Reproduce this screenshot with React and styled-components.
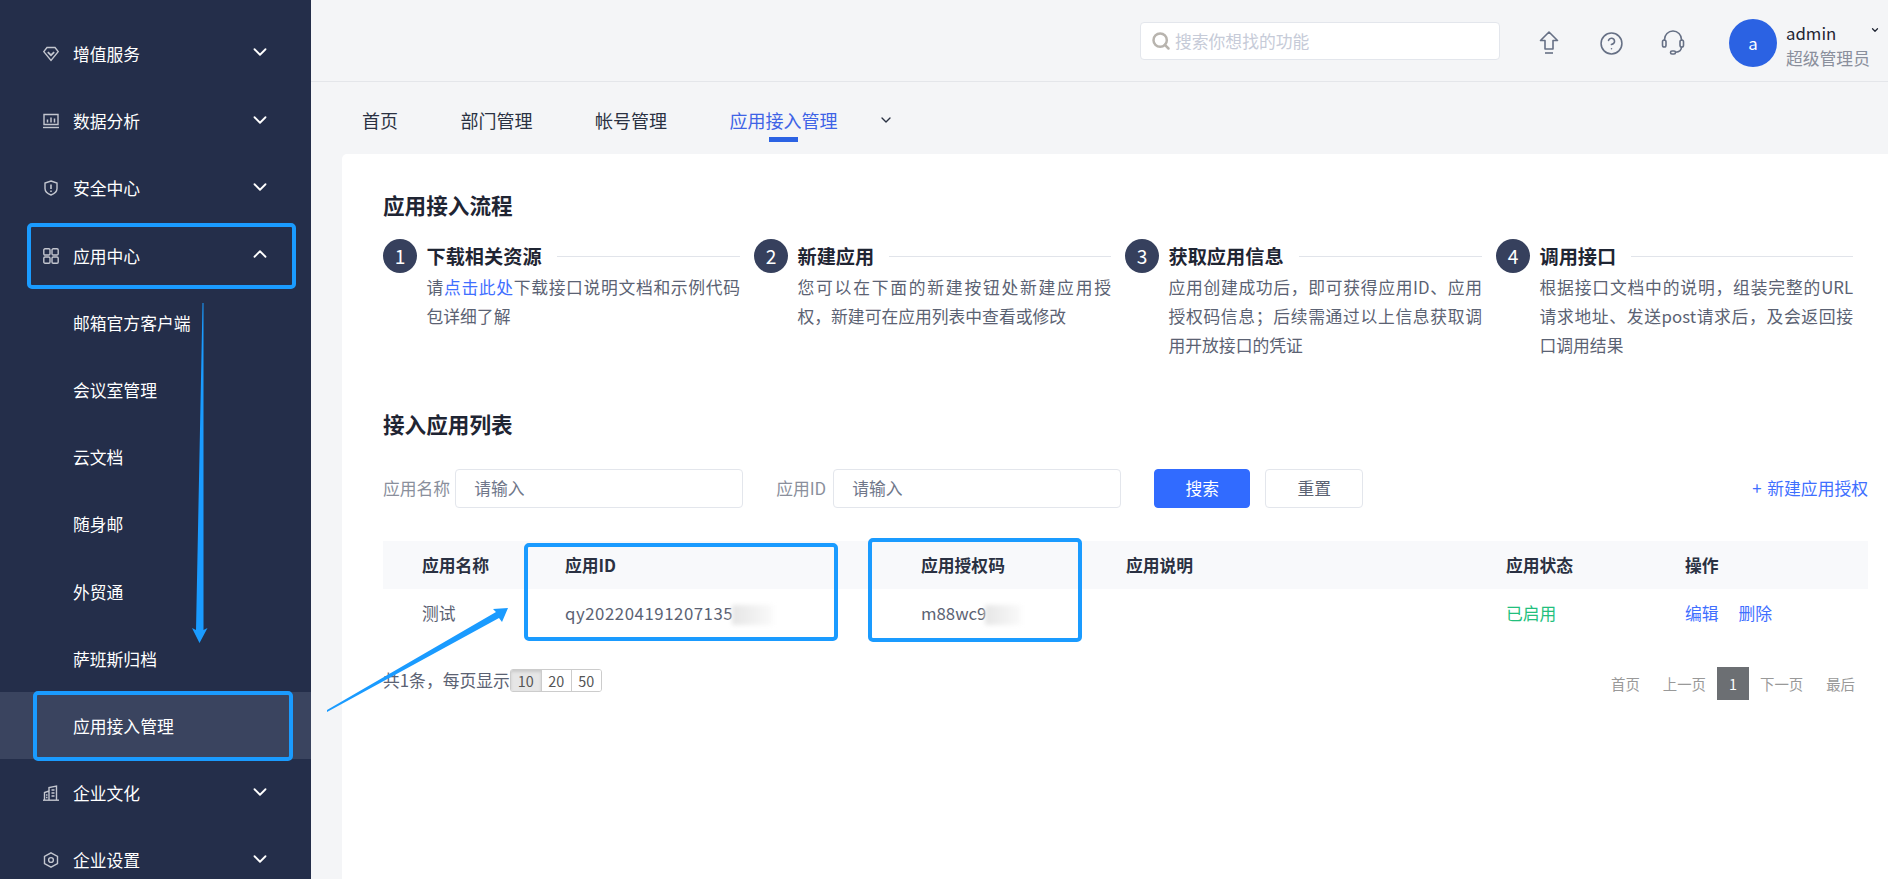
import React from 'react'
import styled, {createGlobalStyle} from 'styled-components'
import {ChevronDown, ChevronUp, CircleHelp, Search} from 'lucide-react'

const GlobalStyle = createGlobalStyle`
    html, body {
        margin: 0;
        padding: 0;
        height: 100%;
        overflow: hidden;
        background: #f4f5f7;
    }
    body {
        font-family: "Noto Sans CJK SC", "Noto Sans", sans-serif;
        font-size: 16.8px;
    }
    * { box-sizing: border-box; }
`

const AppContainer = styled.div`
    position: relative;
    display: flex;
    width: 1888px;
    height: 879px;
    overflow: hidden;
`

/* sidebar */
const Sidebar = styled.nav`
    flex: 0 0 311px;
    padding-top: 20.4px;
    background: #242e4a;
    color: #fff;
`

const MenuRow = styled.div`
    display: flex;
    align-items: center;
    height: 67.2px;
    padding-left: ${props => props.$sub ? '73px' : '43px'};
    padding-right: 40px;
    background: ${props => props.$active ? '#3a445f' : 'transparent'};
    line-height: 1;
`

const MenuIcon = styled.svg`
    flex: 0 0 16px;
    width: 16px;
    height: 16px;
    margin-right: 14px;
    fill: none;
    stroke: #c3c6cf;
    stroke-width: 1.4;
`

const MenuLabel = styled.span`
    flex: 1;
    margin-top: 1px;
`

const MenuChevron = styled.span`
    display: flex;
    margin-top: -3px;
    color: #fff;
`

const DiamondIcon = () =>
    <MenuIcon viewBox="0 0 16 16">
        <path d="M4 1.5h8l3.2 4.2L8 14.5 .8 5.7z" />
        <path d="M4.8 6.2 8 9.2l3.2-3" strokeWidth="1.8" />
    </MenuIcon>

const ScreenIcon = () =>
    <MenuIcon viewBox="0 0 16 16">
        <path d="M1 1.5h14v10H1z" />
        <path d="M0 14.5h16" />
        <path d="M4.5 9.5v-3M8 9.5v-5M11.5 9.5v-4" strokeWidth="1.5" />
    </MenuIcon>

const ShieldIcon = () =>
    <MenuIcon viewBox="0 0 16 16">
        <path d="M8 1 14 3v5.5c0 3-2.8 5.300-6 6.500-3.200-1.200-6-3.500-6-6.500V3z" />
        <path d="M8 4.5v4.500M8 10.500v1.400" strokeWidth="1.6" />
    </MenuIcon>

const GridIcon = () =>
    <MenuIcon viewBox="0 0 16 16">
        <rect x=".8" y=".8" width="6.2" height="6.2" rx="1.2" />
        <rect x="9" y=".8" width="6.2" height="6.2" rx="1.2" />
        <rect x=".8" y="9" width="6.2" height="6.2" rx="1.2" />
        <rect x="9" y="9" width="6.2" height="6.2" rx="1.2" />
    </MenuIcon>

const BuildingIcon = () =>
    <MenuIcon viewBox="0 0 16 16">
        <path d="M0 15.2h16" />
        <path d="M1.5 15V7.5L6 6v9M6 15V2.5L13.500 1v14" />
        <path d="M8.5 5h3M8.5 8h3M8.5 11h3M3 10h1.500M3 12.500h1.500" />
    </MenuIcon>

const HexIcon = () =>
    <MenuIcon viewBox="0 0 16 16">
        <path d="M8 .8 14.5 4.400v7.200L8 15.200 1.500 11.600V4.400z" />
        <circle cx="8" cy="8" r="2.4" />
    </MenuIcon>

const Chevron = ({up}) =>
    <MenuChevron>
        {up ? <ChevronUp size={22} strokeWidth={2} /> : <ChevronDown size={22} strokeWidth={2} />}
    </MenuChevron>

const MenuItem = ({icon: Icon, title, up}) =>
    <MenuRow>
        <Icon />
        <MenuLabel>{title}</MenuLabel>
        <Chevron up={up} />
    </MenuRow>

const SubItem = ({title, active}) =>
    <MenuRow $sub $active={active}>
        <MenuLabel>{title}</MenuLabel>
    </MenuRow>

/* top bar */
const Main = styled.div`
    flex: 1;
    min-width: 0;
    display: flex;
    flex-direction: column;
`

const Header = styled.header`
    display: flex;
    align-items: center;
    justify-content: flex-end;
    flex: 0 0 82px;
    padding: 5px 8px 0 0;
    border-bottom: 1px solid #e4e6ea;
`

const SearchBox = styled.div`
    display: flex;
    align-items: center;
    width: 360px;
    height: 38px;
    margin-right: 36px;
    margin-top: -4px;
    padding-left: 10px;
    background: #fff;
    border: 1px solid #e3e6ec;
    border-radius: 4px;
    color: #c6cbd8;

    svg {
        color: #b8b4ae;
        margin-right: 4px;
    }
`

const HeaderIcon = styled.span`
    display: flex;
    align-items: center;
    justify-content: center;
    width: 26px;
    height: 26px;
    margin-right: ${props => props.$last ? '43px' : '36px'};
    color: #667085;
`

const Avatar = styled.div`
    flex: 0 0 48px;
    height: 48px;
    border-radius: 50%;
    background: #2b62e3;
    color: #fff;
    display: flex;
    align-items: center;
    justify-content: center;
    margin-right: 9px;
`

const UserInfo = styled.div`
    width: 84px;
    margin-top: 5px;
    line-height: 25px;
`

const UserName = styled.div`
    color: #1f2533;
`

const UserRole = styled.div`
    color: #8a8f9c;
`

const UserChevron = styled.span`
    display: flex;
    width: 10px;
    margin-top: -27px;
    color: #1f2533;
`

const UploadIcon = () =>
    <svg width="24" height="26" viewBox="0 0 24 26" fill="none" stroke="currentColor" strokeWidth="1.6" strokeLinejoin="round">
        <path d="M12 2 3.5 10.5H8V19h8v-8.500h4.500z" />
        <path d="M8 23h8" />
    </svg>

const HeadsetIcon = () =>
    <svg width="24" height="26" viewBox="0 0 24 26" fill="none" stroke="currentColor" strokeWidth="1.6">
        <path d="M3.5 11V9.5a8.5 8.5 0 0 1 17 0V11" />
        <rect x="1.5" y="10" width="3.5" height="7" rx="1.75" />
        <rect x="19" y="10" width="3.5" height="7" rx="1.75" />
        <path d="M20.5 17c0 3-2.500 5-6 5.300" />
        <rect x="9.5" y="21" width="5" height="3" rx="1.5" />
    </svg>

/* tabs */
const Tabs = styled.div`
    display: flex;
    flex: 0 0 72px;
    padding: 23px 0 0 51px;
    font-size: 18px;
    line-height: 30px;
    color: #2a3142;
`

const Tab = styled.div`
    position: relative;
    margin-right: 62.5px;
    color: ${props => props.$active ? '#3e63e6' : '#2a3142'};

    &::after {
        content: '';
        display: ${props => props.$active ? 'block' : 'none'};
        position: absolute;
        left: 50%;
        top: 32px;
        width: 29px;
        height: 5px;
        margin-left: -14.5px;
        background: #2b62e3;
    }
`

const TabChevron = styled.span`
    display: flex;
    align-items: center;
    height: 30px;
    margin-left: -22px;
    color: #2a3142;
`

/* card */
const Card = styled.section`
    flex: 1;
    margin-left: 31px;
    padding: 36px 20px 0 41px;
    background: #fff;
    border-radius: 5px 0 0 0;
`

const SectionTitle = styled.h2`
    margin: ${props => props.$second ? '49.6px' : '0'} 0 0;
    font-size: 21.6px;
    font-weight: 700;
    line-height: 30px;
    color: #1f2533;
`

const Steps = styled.div`
    display: grid;
    grid-template-columns: repeat(4, 357px);
    column-gap: 14px;
    margin-top: 19px;
`

const Step = styled.div`
    display: grid;
    grid-template-columns: 34px 313.5px;
    column-gap: 9.5px;
    align-content: start;
`

const StepNumber = styled.div`
    display: flex;
    align-items: center;
    justify-content: center;
    width: 34px;
    height: 34px;
    border-radius: 50%;
    background: #36405d;
    color: #fff;
    font-size: 19.2px;
`

const StepHead = styled.div`
    display: flex;
    align-items: center;
    height: 34px;
`

const StepTitle = styled.div`
    font-size: 19.2px;
    font-weight: 700;
    color: #1f2533;
    white-space: nowrap;
`

const StepLine = styled.div`
    flex: 1;
    height: 1px;
    margin-left: 15px;
    background: #e1e4ea;
`

const StepText = styled.p`
    grid-column: 2;
    margin: 0;
    line-height: 28.8px;
    text-align: justify;
    color: #5b6273;

    a {
        color: #3f6fff;
        text-decoration: none;
    }
`

const FilterRow = styled.div`
    display: flex;
    align-items: center;
    height: 39px;
    margin-top: 30px;
`

const FilterLabel = styled.span`
    margin-right: ${props => props.$gap || 5}px;
    color: #8a8f9c;
    white-space: nowrap;
`

const FilterInput = styled.div`
    width: 288px;
    height: 39px;
    margin-right: 33px;
    padding-left: 18px;
    line-height: 37px;
    border: 1px solid #e3e6ec;
    border-radius: 4px;
    color: #70778a;
`

const Button = styled.button`
    width: ${props => props.$primary ? '96px' : '98px'};
    height: 39px;
    margin-right: 15px;
    padding: 0;
    font: inherit;
    border-radius: 4px;
    border: 1px solid ${props => props.$primary ? '#316bff' : '#e3e6ec'};
    background: ${props => props.$primary ? '#316bff' : '#fff'};
    color: ${props => props.$primary ? '#fff' : '#5b6273'};
`

const AddLink = styled.a`
    margin-left: auto;
    color: #3f6fff;
    word-spacing: 2px;
`

const TableHead = styled.div`
    display: grid;
    grid-template-columns: 143px 356px 205px 380px 179px 222px;
    align-items: center;
    height: 48px;
    margin-top: 33px;
    background: #f8f9fb;
    font-weight: 700;
    color: #2a3142;
`

const TableRow = styled(TableHead)`
    margin-top: 0;
    background: #fff;
    font-weight: 400;
    color: #5b6273;
`

const Cell = styled.div`
    padding-left: 39px;
    white-space: nowrap;
    color: ${props => props.$color || 'inherit'};
    letter-spacing: ${props => props.$spaced ? '.55px' : '0'};
`

const RowLink = styled.a`
    margin-right: 20px;
    color: #3f6fff;
`

const Smudge = styled.span`
    display: inline-block;
    vertical-align: middle;
    width: ${props => props.$w}px;
    height: 20px;
    margin-left: -1px;
    background: linear-gradient(90deg, #e6e6e6, #f4f4f4 70%, #fafafa);
    filter: blur(2px);
`

const Footer = styled.div`
    display: flex;
    align-items: flex-start;
    justify-content: space-between;
    margin-top: 30px;
    padding-right: 13px;
`

const PageSize = styled.div`
    display: flex;
    align-items: center;
    height: 23px;
    margin-top: 2px;
    color: #5b6273;
`

const SizeGroup = styled.div`
    display: flex;
    height: 23px;
    border: 1px solid #ccc;
    border-radius: 3px;
    overflow: hidden;
`

const SizeButton = styled.span`
    width: 30px;
    text-align: center;
    font-size: 14.4px;
    line-height: 21px;
    color: #555;
    background: ${props => props.$active ? '#e6e6e6' : '#fff'};
    box-shadow: ${props => props.$active ? 'inset 0 2px 3px rgba(0,0,0,.12)' : 'none'};
    border-left: ${props => props.$first ? '0' : '1px solid #ccc'};
`

const Pager = styled.div`
    display: flex;
    align-items: center;
    gap: 23px;
    height: 33px;
    font-size: 14.4px;
    color: #999;
`

const PagerCurrent = styled.span`
    width: 32px;
    height: 33px;
    margin: 0 -12px;
    line-height: 33px;
    text-align: center;
    background: #6c6f73;
    color: #fff;
`

/* blue markup drawn on top of the screenshot */
const MarkBox = styled.div`
    position: absolute;
    left: ${props => props.$x}px;
    top: ${props => props.$y}px;
    width: ${props => props.$w}px;
    height: ${props => props.$h}px;
    border: 4px solid #1a9bff;
    border-radius: 5px;
    pointer-events: none;
`

const MarkLayer = styled.svg`
    position: absolute;
    left: 0;
    top: 0;
    width: 1888px;
    height: 879px;
    pointer-events: none;
    fill: #1a9bff;
`

const steps = [
    {n: 1, title: '下载相关资源', text: <><span>请</span><a>点击此处</a><span>下载接口说明文档和示例代码</span><span>包详细了解</span></>},
    {n: 2, title: '新建应用', text: '您可以在下面的新建按钮处新建应用授权，新建可在应用列表中查看或修改'},
    {n: 3, title: '获取应用信息', text: '应用创建成功后，即可获得应用ID、应用授权码信息；后续需通过以上信息获取调用开放接口的凭证'},
    {n: 4, title: '调用接口', text: '根据接口文档中的说明，组装完整的URL请求地址、发送post请求后，及会返回接口调用结果'},
]

function App() {
    return (
        <AppContainer>
            <GlobalStyle />
            <Sidebar>
                <MenuItem icon={DiamondIcon} title="增值服务" />
                <MenuItem icon={ScreenIcon} title="数据分析" />
                <MenuItem icon={ShieldIcon} title="安全中心" />
                <MenuItem icon={GridIcon} title="应用中心" up />
                <SubItem title="邮箱官方客户端" />
                <SubItem title="会议室管理" />
                <SubItem title="云文档" />
                <SubItem title="随身邮" />
                <SubItem title="外贸通" />
                <SubItem title="萨班斯归档" />
                <SubItem title="应用接入管理" active />
                <MenuItem icon={BuildingIcon} title="企业文化" />
                <MenuItem icon={HexIcon} title="企业设置" />
            </Sidebar>
            <Main>
                <Header>
                    <SearchBox>
                        <Search size={20} strokeWidth={3} />
                        搜索你想找的功能
                    </SearchBox>
                    <HeaderIcon><UploadIcon /></HeaderIcon>
                    <HeaderIcon><CircleHelp size={25} strokeWidth={1.5} /></HeaderIcon>
                    <HeaderIcon $last><HeadsetIcon /></HeaderIcon>
                    <Avatar>a</Avatar>
                    <UserInfo>
                        <UserName>admin</UserName>
                        <UserRole>超级管理员</UserRole>
                    </UserInfo>
                    <UserChevron><ChevronDown size={12} strokeWidth={3} /></UserChevron>
                </Header>
                <Tabs>
                    <Tab>首页</Tab>
                    <Tab>部门管理</Tab>
                    <Tab>帐号管理</Tab>
                    <Tab $active>应用接入管理</Tab>
                    <TabChevron><ChevronDown size={16} strokeWidth={2} /></TabChevron>
                </Tabs>
                <Card>
                    <SectionTitle>应用接入流程</SectionTitle>
                    <Steps>
                        {steps.map(s =>
                            <Step key={s.n}>
                                <StepNumber>{s.n}</StepNumber>
                                <StepHead>
                                    <StepTitle>{s.title}</StepTitle>
                                    <StepLine />
                                </StepHead>
                                <StepText>{s.text}</StepText>
                            </Step>
                        )}
                    </Steps>
                    <SectionTitle $second>接入应用列表</SectionTitle>
                    <FilterRow>
                        <FilterLabel>应用名称</FilterLabel>
                        <FilterInput>请输入</FilterInput>
                        <FilterLabel $gap={7}>应用ID</FilterLabel>
                        <FilterInput>请输入</FilterInput>
                        <Button $primary>搜索</Button>
                        <Button>重置</Button>
                        <AddLink>+ 新建应用授权</AddLink>
                    </FilterRow>
                    <TableHead>
                        <Cell>应用名称</Cell>
                        <Cell>应用ID</Cell>
                        <Cell>应用授权码</Cell>
                        <Cell>应用说明</Cell>
                        <Cell>应用状态</Cell>
                        <Cell>操作</Cell>
                    </TableHead>
                    <TableRow>
                        <Cell>测试</Cell>
                        <Cell $spaced>qy202204191207135<Smudge $w={41} /></Cell>
                        <Cell>m88wc9<Smudge $w={36} /></Cell>
                        <Cell />
                        <Cell $color="#22bf7d">已启用</Cell>
                        <Cell><RowLink>编辑</RowLink><RowLink>删除</RowLink></Cell>
                    </TableRow>
                    <Footer>
                        <PageSize>
                            共1条，每页显示
                            <SizeGroup>
                                <SizeButton $first $active>10</SizeButton>
                                <SizeButton>20</SizeButton>
                                <SizeButton>50</SizeButton>
                            </SizeGroup>
                        </PageSize>
                        <Pager>
                            <span>首页</span>
                            <span>上一页</span>
                            <PagerCurrent>1</PagerCurrent>
                            <span>下一页</span>
                            <span>最后</span>
                        </Pager>
                    </Footer>
                </Card>
            </Main>
            <MarkBox $x={27} $y={223} $w={269} $h={66} />
            <MarkBox $x={33} $y={691} $w={260} $h={70} />
            <MarkBox $x={524} $y={543} $w={314} $h={98} />
            <MarkBox $x={868} $y={538} $w={214} $h={104} />
            <MarkLayer viewBox="0 0 1888 879">
                <polygon points="202.5,303 203.5,303 203.5,630 207.5,628 199.5,643 192,628 196,630" />
                <polygon points="327,710 496,612 493,609 508,608 502,622 499,618 327,712" />
            </MarkLayer>
        </AppContainer>
    )
}

export default App
